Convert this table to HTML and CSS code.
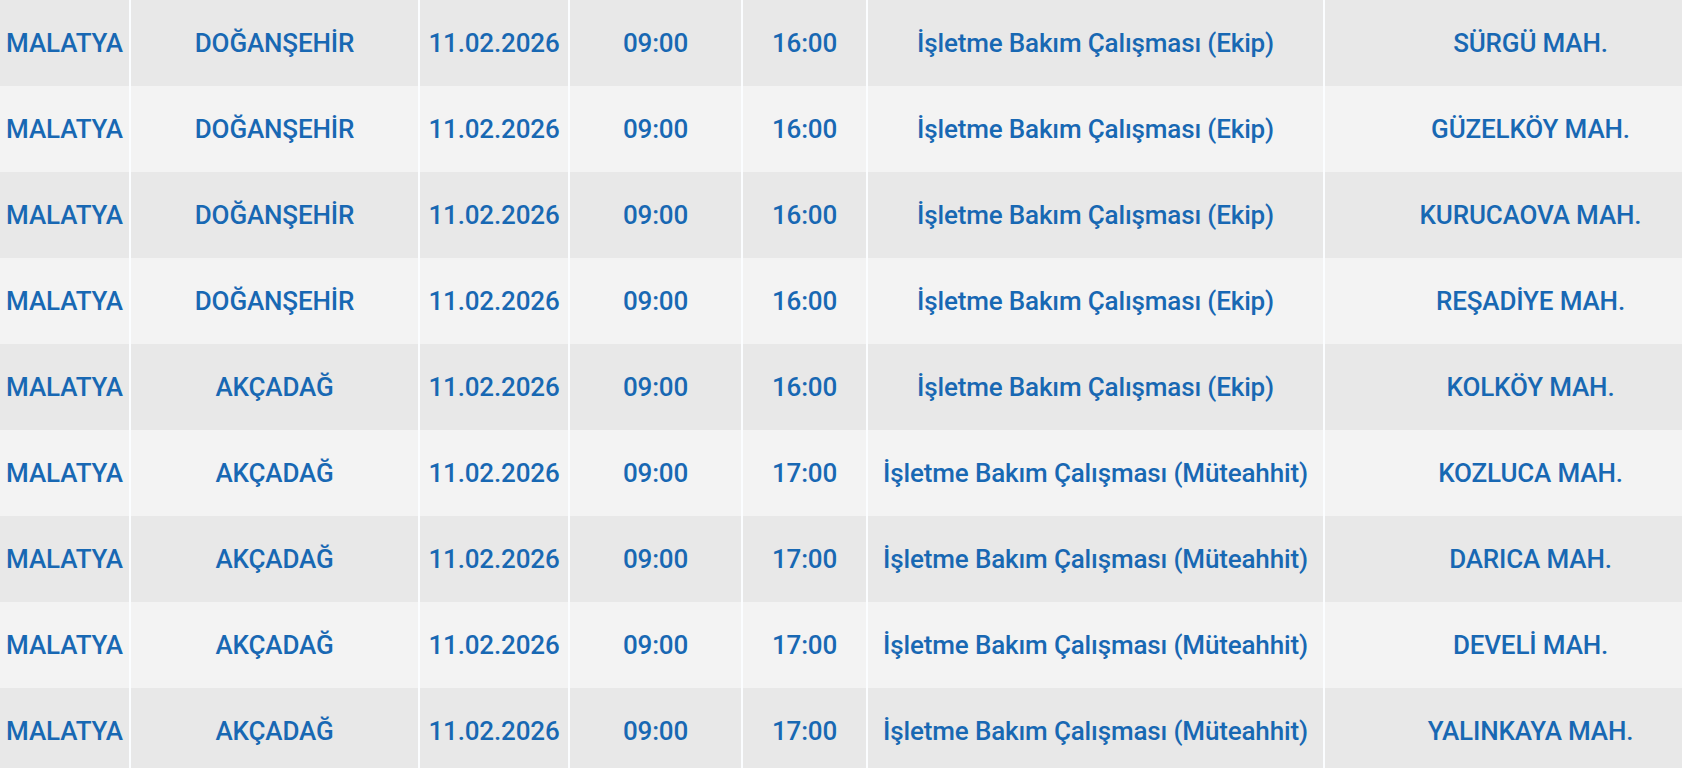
FILE: index.html
```html
<!DOCTYPE html>
<html lang="tr">
<head>
<meta charset="utf-8">
<title>Kesinti Listesi</title>
<link rel="stylesheet" href="styles.css">
</head>
<body>
<div class="wrap">
<table class="outages">
<colgroup>
<col class="c-il"><col class="c-ilce"><col class="c-tarih"><col class="c-bas"><col class="c-bit"><col class="c-neden"><col class="c-mah">
</colgroup>
<tbody>
<tr><td>MALATYA</td><td>DOĞANŞEHİR</td><td>11.02.2026</td><td>09:00</td><td>16:00</td><td>İşletme Bakım Çalışması (Ekip)</td><td>SÜRGÜ MAH.</td></tr>
<tr><td>MALATYA</td><td>DOĞANŞEHİR</td><td>11.02.2026</td><td>09:00</td><td>16:00</td><td>İşletme Bakım Çalışması (Ekip)</td><td>GÜZELKÖY MAH.</td></tr>
<tr><td>MALATYA</td><td>DOĞANŞEHİR</td><td>11.02.2026</td><td>09:00</td><td>16:00</td><td>İşletme Bakım Çalışması (Ekip)</td><td>KURUCAOVA MAH.</td></tr>
<tr><td>MALATYA</td><td>DOĞANŞEHİR</td><td>11.02.2026</td><td>09:00</td><td>16:00</td><td>İşletme Bakım Çalışması (Ekip)</td><td>REŞADİYE MAH.</td></tr>
<tr><td>MALATYA</td><td>AKÇADAĞ</td><td>11.02.2026</td><td>09:00</td><td>16:00</td><td>İşletme Bakım Çalışması (Ekip)</td><td>KOLKÖY MAH.</td></tr>
<tr><td>MALATYA</td><td>AKÇADAĞ</td><td>11.02.2026</td><td>09:00</td><td>17:00</td><td>İşletme Bakım Çalışması (Müteahhit)</td><td>KOZLUCA MAH.</td></tr>
<tr><td>MALATYA</td><td>AKÇADAĞ</td><td>11.02.2026</td><td>09:00</td><td>17:00</td><td>İşletme Bakım Çalışması (Müteahhit)</td><td>DARICA MAH.</td></tr>
<tr><td>MALATYA</td><td>AKÇADAĞ</td><td>11.02.2026</td><td>09:00</td><td>17:00</td><td>İşletme Bakım Çalışması (Müteahhit)</td><td>DEVELİ MAH.</td></tr>
<tr><td>MALATYA</td><td>AKÇADAĞ</td><td>11.02.2026</td><td>09:00</td><td>17:00</td><td>İşletme Bakım Çalışması (Müteahhit)</td><td>YALINKAYA MAH.</td></tr>
</tbody>
</table>
</div>
</body>
</html>
```
FILE: styles.css
```css
html, body {
  margin: 0;
  padding: 0;
  background: #f2f2f2;
  overflow: hidden;
}
.wrap {
  width: 1682px;
  height: 768px;
  overflow: hidden;
}
.outages {
  border-collapse: collapse;
  table-layout: fixed;
  width: 1736px;
  font-family: Roboto, "Liberation Sans", sans-serif;
  font-weight: 500;
  font-size: 26px;
  letter-spacing: -0.15px;
  color: #1868b3;
}
.c-il { width: 130px; }
.c-ilce { width: 289px; }
.c-tarih { width: 150px; }
.c-bas { width: 173px; }
.c-bit { width: 125px; }
.c-neden { width: 457px; }
.c-mah { width: 412px; }
.outages td {
  height: 86px;
  padding: 0;
  text-align: center;
  vertical-align: middle;
  white-space: nowrap;
  border-left: 2px solid #fbfdff;
  box-sizing: border-box;
}
.outages td:first-child { border-left: none; }
.outages tr:nth-child(odd) { background: #e8e8e8; }
.outages tr:nth-child(even) { background: #f3f3f3; }
```
